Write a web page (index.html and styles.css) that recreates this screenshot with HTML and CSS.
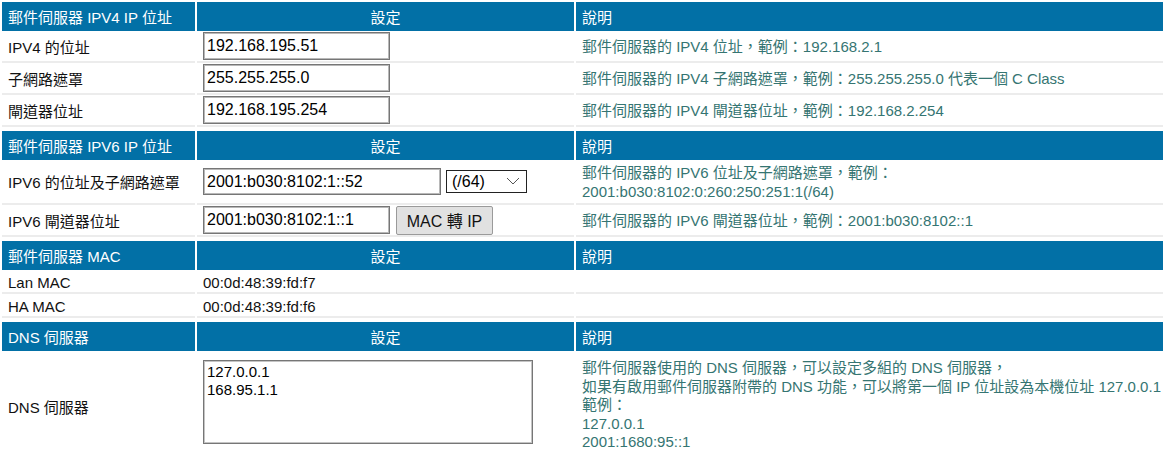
FILE: index.html
```html
<!DOCTYPE html>
<html lang="zh-Hant">
<head>
    <meta charset="UTF-8">
    <title>郵件伺服器網路設定</title>
    <link rel="stylesheet" href="styles.css">
</head>
<body>
    <!-- IPv4 -->
    <table class="section">
        <tr>
            <th class="c1">郵件伺服器 IPV4 IP 位址</th>
            <th class="c2">設定</th>
            <th>說明</th>
        </tr>
        <tr>
            <td>IPV4 的位址</td>
            <td><input class="ip" type="text" value="192.168.195.51"></td>
            <td class="desc">郵件伺服器的 IPV4 位址，範例：192.168.2.1</td>
        </tr>
        <tr>
            <td>子網路遮罩</td>
            <td><input class="ip" type="text" value="255.255.255.0"></td>
            <td class="desc">郵件伺服器的 IPV4 子網路遮罩，範例：255.255.255.0 代表一個 C Class</td>
        </tr>
        <tr>
            <td>閘道器位址</td>
            <td><input class="ip" type="text" value="192.168.195.254"></td>
            <td class="desc">郵件伺服器的 IPV4 閘道器位址，範例：192.168.2.254</td>
        </tr>
    </table>

    <!-- IPv6 -->
    <table class="section">
        <tr>
            <th class="c1">郵件伺服器 IPV6 IP 位址</th>
            <th class="c2">設定</th>
            <th>說明</th>
        </tr>
        <tr class="tall">
            <td>IPV6 的位址及子網路遮罩</td>
            <td>
                <div class="field">
                    <input class="ip wide" type="text" value="2001:b030:8102:1::52">
                    <span class="select-wrap">
                        <select class="prefix">
                            <option>(/64)</option>
                        </select>
                        <svg class="chev" width="14" height="8" viewBox="0 0 14 8"><path d="M1 1 L7 7 L13 1" fill="none" stroke="#555" stroke-width="1"/></svg>
                    </span>
                </div>
            </td>
            <td class="desc">郵件伺服器的 IPV6 位址及子網路遮罩，範例：<br>2001:b030:8102:0:260:250:251:1(/64)</td>
        </tr>
        <tr>
            <td>IPV6 閘道器位址</td>
            <td>
                <div class="field">
                    <input class="ip gw" type="text" value="2001:b030:8102:1::1">
                    <button class="btn">MAC 轉 IP</button>
                </div>
            </td>
            <td class="desc">郵件伺服器的 IPV6 閘道器位址，範例：2001:b030:8102::1</td>
        </tr>
    </table>

    <!-- MAC -->
    <table class="section">
        <tr>
            <th class="c1">郵件伺服器 MAC</th>
            <th class="c2">設定</th>
            <th>說明</th>
        </tr>
        <tr class="short">
            <td>Lan MAC</td>
            <td>00:0d:48:39:fd:f7</td>
            <td></td>
        </tr>
        <tr class="short">
            <td>HA MAC</td>
            <td>00:0d:48:39:fd:f6</td>
            <td></td>
        </tr>
    </table>

    <!-- DNS -->
    <table class="section">
        <tr>
            <th class="c1">DNS 伺服器</th>
            <th class="c2">設定</th>
            <th>說明</th>
        </tr>
        <tr class="dns">
            <td>DNS 伺服器</td>
            <td class="top"><textarea class="dns-list">127.0.0.1
168.95.1.1</textarea></td>
            <td class="desc top">郵件伺服器使用的 DNS 伺服器，可以設定多組的 DNS 伺服器，<br>如果有啟用郵件伺服器附帶的 DNS 功能，可以將第一個 IP 位址設為本機位址 127.0.0.1<br>範例：<br>127.0.0.1<br>2001:1680:95::1</td>
        </tr>
    </table>
</body>
</html>
```

FILE: styles.css
```css
html, body {
    overflow: hidden;
}

body {
    margin: 2px 0 0 0;
    font-family: "Liberation Sans", "Noto Sans CJK TC", sans-serif;
    font-size: 15px;
    color: #111;
    background: #fff;
}

.section {
    width: calc(100% + 2px);
    border-collapse: separate;
    border-spacing: 2px 0;
    table-layout: fixed;
    margin-bottom: 4px;
}

th, td {
    box-sizing: border-box;
    padding: 0 6px;
    text-align: left;
    white-space: nowrap;
}

th {
    height: 29px;
    background: #0270a6;
    color: #fff;
    font-weight: normal;
    font-size: 15px;
}

th.c1 {
    width: 193px;
}

th.c2 {
    width: 377px;
    text-align: center;
}

td {
    height: 32px;
    border-bottom: 2px solid #ececec;
    vertical-align: middle;
}

td.top {
    vertical-align: top;
}

tr.tall td {
    height: 45px;
}

tr.short td {
    height: 24px;
    padding-top: 2px;
}

tr.dns td {
    height: 112px;
    padding-top: 8px;
    padding-bottom: 8px;
}

.desc {
    color: #357572;
    line-height: 19px;
}

tr.dns .desc {
    line-height: 18.5px;
}

/* Form controls */
.ip {
    box-sizing: border-box;
    width: 187px;
    height: 28px;
    padding: 0 3px;
    margin: 0;
    border: 1px solid #767676;
    box-shadow: inset 0 0 0 1px #b8b8b8;
    font-family: "Liberation Sans", sans-serif;
    font-size: 16px;
    color: #000;
    vertical-align: middle;
}

.ip.wide {
    width: 238px;
    height: 27px;
}

.field {
    display: flex;
    align-items: center;
    gap: 5px;
}

.field .gw + .btn {
    margin-left: 1px;
}

.select-wrap {
    position: relative;
    display: inline-block;
}

.prefix {
    appearance: none;
    -webkit-appearance: none;
    box-sizing: border-box;
    width: 81px;
    height: 23px;
    margin: 0;
    padding: 0 0 0 5px;
    border: 1px solid #222;
    border-radius: 0;
    background: #fff;
    font-family: "Liberation Sans", sans-serif;
    font-size: 16px;
    color: #000;
}

.chev {
    position: absolute;
    right: 7px;
    top: 7px;
    pointer-events: none;
}

.btn {
    box-sizing: border-box;
    width: 97px;
    height: 29px;
    margin: 0;
    padding: 0;
    border: 1px solid #9a9a9a;
    border-radius: 2px;
    background: #e1e1e1;
    font-family: "Liberation Sans", "Noto Sans CJK TC", sans-serif;
    font-size: 16px;
    color: #111;
}

.dns-list {
    box-sizing: border-box;
    display: block;
    width: 330px;
    height: 84px;
    margin: 1px 0 0 0;
    padding: 2px 3px;
    border: 1px solid #767676;
    box-shadow: inset 0 0 0 1px #c4c4c4;
    resize: none;
    font-family: "Liberation Sans", sans-serif;
    font-size: 15px;
    line-height: 18px;
    color: #000;
}
```
